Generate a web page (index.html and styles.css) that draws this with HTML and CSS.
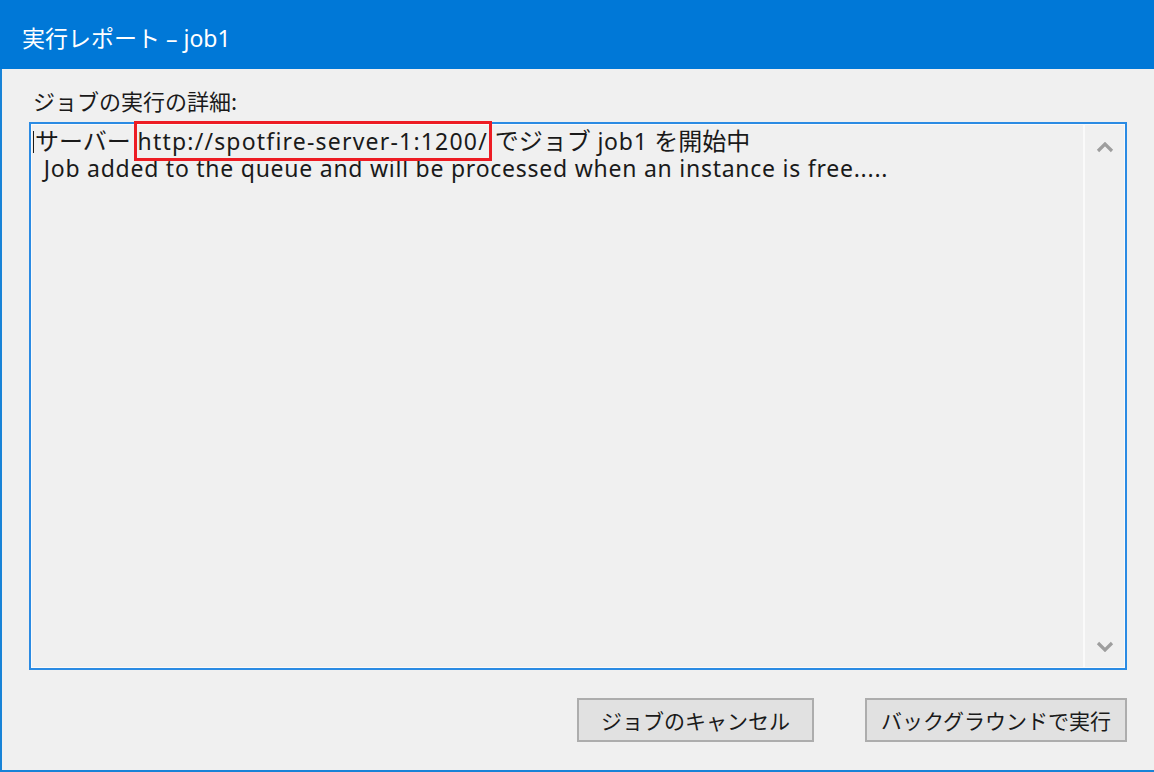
FILE: index.html
```html
<!DOCTYPE html>
<html lang="ja">
<head>
    <meta charset="UTF-8">
    <title>実行レポート – job1</title>
    <link rel="stylesheet" href="styles.css">
</head>
<body>
    <div class="window">
        <div class="title-bar">実行レポート – job1</div>

        <div class="content">
            <div class="details-label">ジョブの実行の詳細:</div>

            <div class="log-box">
                <div class="log-text">
                    <div class="log-line"><span class="caret"></span><span class="jp">サーバー</span> <span class="url">http://spotfire-server-1:1200/</span> <span class="jp">でジョブ</span> job1 <span class="jp">を開始中</span></div>
                    <div class="log-line log-indent">&nbsp;Job added to the queue and will be processed when an instance is free.....</div>
                </div>
                <div class="scroll-bar">
                    <svg class="arrow" width="18" height="11" viewBox="0 0 18 11">
                        <path d="M2 9 L9 2 L16 9" fill="none" stroke="#9e9e9e" stroke-width="3.2"/>
                    </svg>
                    <svg class="arrow" width="18" height="11" viewBox="0 0 18 11">
                        <path d="M2 2 L9 9 L16 2" fill="none" stroke="#9e9e9e" stroke-width="3.2"/>
                    </svg>
                </div>
            </div>

            <div class="button-row">
                <button class="btn btn-cancel">ジョブのキャンセル</button>
                <button class="btn btn-background">バックグラウンドで実行</button>
            </div>
        </div>
    </div>
</body>
</html>
```

FILE: styles.css
```css
html, body {
    margin: 0;
    padding: 0;
}

body {
    width: 1154px;
    height: 772px;
    overflow: hidden;
    background-color: #f0f0f0;
    font-family: "Noto Sans CJK JP", "Noto Sans", sans-serif;
}

.window {
    box-sizing: border-box;
    width: 1156px;
    height: 772px;
    border-left: 2px solid #1883d7;
    border-bottom: 2px solid #1883d7;
    display: flex;
    flex-direction: column;
}

.title-bar {
    height: 69px;
    flex-shrink: 0;
    margin-left: -2px;
    padding: 4px 0 0 22px;
    box-sizing: border-box;
    background-color: #0078d7;
    color: #fff;
    font-family: "Noto Sans", "Noto Sans CJK JP", sans-serif;
    font-size: 23px;
    display: flex;
    align-items: center;
}

.content {
    flex-grow: 1;
    display: flex;
    flex-direction: column;
    padding: 0 29px 0 27px;
}

.details-label {
    margin-top: 13px;
    height: 40px;
    font-size: 22px;
    line-height: 36px;
    color: #1a1a1a;
    padding-left: 4px;
}

.log-box {
    height: 548px;
    box-sizing: border-box;
    border: 2px solid #2b8be3;
    box-shadow: inset 0 0 0 1px #fafafa;
    display: flex;
}

.log-text {
    flex-grow: 1;
    padding: 2px 0 0 2px;
    font-family: "Noto Sans", "Noto Sans CJK JP", sans-serif;
    font-size: 23px;
    letter-spacing: 0.75px;
    line-height: 27px;
    color: #1a1a1a;
}

.log-line {
    white-space: pre;
}

.log-indent {
    padding-left: 4px;
}

.jp {
    font-family: "Noto Sans CJK JP", sans-serif;
    font-size: 24px;
    letter-spacing: 0;
}

.caret {
    display: inline-block;
    width: 1px;
    height: 22px;
    background-color: #1a1a1a;
    vertical-align: -3px;
    margin-right: 1px;
}

.url {
    letter-spacing: 1.2px;
    outline: 3px solid #ed1c24;
    outline-offset: 1px;
}

.scroll-bar {
    width: 40px;
    border-left: 2px solid #fafafa;
    display: flex;
    flex-direction: column;
    justify-content: space-between;
    align-items: center;
    padding: 18px 0 16px;
}

.arrow {
    display: block;
}

.button-row {
    margin-top: 28px;
    display: flex;
    justify-content: flex-end;
    gap: 51px;
}

.btn {
    height: 44px;
    box-sizing: border-box;
    background-color: #e1e1e1;
    border: 2px solid #adadad;
    font-family: "Noto Sans CJK JP", sans-serif;
    font-size: 21px;
    color: #1a1a1a;
    padding: 0;
}

.btn-cancel {
    width: 237px;
}

.btn-background {
    width: 262px;
}
```
